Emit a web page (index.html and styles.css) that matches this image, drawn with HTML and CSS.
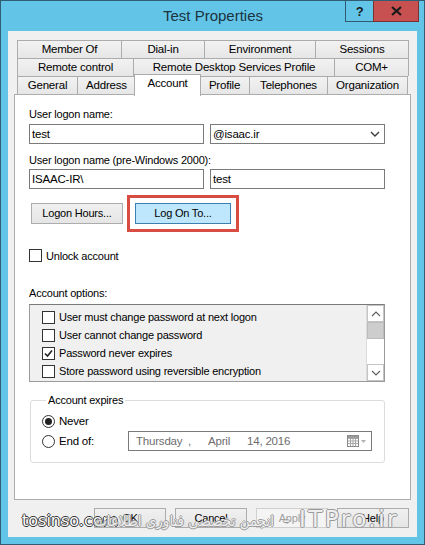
FILE: index.html
```html
<html>
<head>
    <title>Test Properties</title>
    <link rel="stylesheet" href="styles.css">
</head>
<body>

<div class="window">
    <div class="titlebar">
        <div></div>
        <div class="title">Test Properties</div>
        <div class="caption-buttons">
            <div class="cap-btn help">?</div>
            <div class="cap-btn close">
                <svg width="11" height="10" viewBox="0 0 11 10"><path d="M1 1 L10 9 M10 1 L1 9" stroke="#1a1a1a" stroke-width="2.2"/></svg>
            </div>
        </div>
    </div>

    <div class="client">
        <div class="tabs">
            <div class="tab-row">
                <div class="tab" style="width:105px">Member Of</div>
                <div class="tab" style="width:84px">Dial-in</div>
                <div class="tab" style="width:112px">Environment</div>
                <div class="tab" style="width:94px">Sessions</div>
            </div>
            <div class="tab-row">
                <div class="tab" style="width:117px">Remote control</div>
                <div class="tab" style="width:202px">Remote Desktop Services Profile</div>
                <div class="tab" style="width:75px">COM+</div>
            </div>
            <div class="tab-row">
                <div class="tab" style="width:61px">General</div>
                <div class="tab" style="width:59px">Address</div>
                <div class="tab selected" style="width:67px">Account</div>
                <div class="tab" style="width:51px">Profile</div>
                <div class="tab" style="width:79px">Telephones</div>
                <div class="tab" style="width:81px">Organization</div>
            </div>
        </div>

        <div class="panel">
            <div class="label">User logon name:</div>
            <div class="field-row">
                <div class="textbox">test</div>
                <div class="textbox combo">
                    <span>@isaac.ir</span>
                    <svg width="10" height="7" viewBox="0 0 10 7"><path d="M1 1 L5 5 L9 1" fill="none" stroke="#3a3a3a" stroke-width="1.4"/></svg>
                </div>
            </div>

            <div class="label second">User logon name (pre-Windows 2000):</div>
            <div class="field-row">
                <div class="textbox">ISAAC-IR\</div>
                <div class="textbox">test</div>
            </div>

            <div class="button-row">
                <div class="btn">Logon Hours...</div>
                <div class="btn focused">Log On To...</div>
            </div>

            <div class="check unlock">
                <span class="box"></span>
                <span>Unlock account</span>
            </div>

            <div class="label options">Account options:</div>
            <div class="listbox">
                <div class="list-items">
                    <div class="check"><span class="box"></span><span>User must change password at next logon</span></div>
                    <div class="check"><span class="box"></span><span>User cannot change password</span></div>
                    <div class="check"><span class="box checked"><svg width="11" height="11" viewBox="0 0 11 11"><path d="M2 5.5 L4.5 8 L9 2.5" fill="none" stroke="#222" stroke-width="1.6"/></svg></span><span>Password never expires</span></div>
                    <div class="check"><span class="box"></span><span>Store password using reversible encryption</span></div>
                </div>
                <div class="scrollbar">
                    <div class="sb-arrow">
                        <svg width="10" height="6" viewBox="0 0 10 6"><path d="M1 5 L5 1 L9 5" fill="none" stroke="#606060" stroke-width="1.2"/></svg>
                    </div>
                    <div class="sb-thumb"></div>
                    <div class="sb-track"></div>
                    <div class="sb-arrow">
                        <svg width="10" height="6" viewBox="0 0 10 6"><path d="M1 1 L5 5 L9 1" fill="none" stroke="#606060" stroke-width="1.2"/></svg>
                    </div>
                </div>
            </div>

            <fieldset class="group">
                <legend>Account expires</legend>
                <div class="radio-row">
                    <span class="radio on"></span>
                    <span>Never</span>
                </div>
                <div class="radio-row">
                    <span class="radio"></span>
                    <span class="end-of">End of:</span>
                    <div class="datepicker">
                        <span class="dp-day">Thursday</span>
                        <span class="dp-comma">,</span>
                        <span class="dp-month">April</span>
                        <span>14, 2016</span>
                        <span class="dp-icon">
                            <svg width="20" height="12" viewBox="0 0 20 12">
                                <rect x="0.5" y="0.5" width="11" height="11" fill="#fff" stroke="#8a8a8a"/>
                                <path d="M1 3.5 H11 M1 6 H11 M1 8.5 H11 M3.5 3 V11 M6 3 V11 M8.5 3 V11" stroke="#a8a8a8" stroke-width="1"/>
                                <rect x="1" y="1" width="10" height="2" fill="#9a9a9a"/>
                                <path d="M14 5 L19 5 L16.5 8 Z" fill="#b0b0b0"/>
                            </svg>
                        </span>
                    </div>
                </div>
            </fieldset>
        </div>

        <div class="dialog-buttons">
            <div class="btn">OK</div>
            <div class="btn">Cancel</div>
            <div class="btn disabled">Apply</div>
            <div class="btn">Help</div>
        </div>
    </div>
</div>

<div class="watermark">
    <span class="wm-site">tosinso.com</span>
    <span class="wm-forum">انجمن تخصصی فناوری اطلاعات</span>
    <span class="wm-dash">-</span>
    <span class="wm-itpro">ITPro.ir</span>
</div>

</body>
</html>
```

FILE: styles.css
```css
body {
    margin: 0;
    font-family: 'Liberation Sans', Arial, sans-serif;
    font-size: 11px;
    letter-spacing: -0.2px;
    color: #000;
    background-color: #fff;
}

.window {
    position: relative;
    width: 425px;
    height: 545px;
    box-sizing: border-box;
    border: 1px solid #2f5d73;
    background-color: #62c5e8;
}

.titlebar {
    height: 30px;
    display: grid;
    grid-template-columns: 1fr auto 1fr;
}

.title {
    font-size: 15px;
    letter-spacing: 0;
    color: #1c3340;
    line-height: 30px;
    padding-left: 1px;
}

.caption-buttons {
    display: flex;
    justify-content: flex-end;
    align-items: flex-start;
    padding-right: 5px;
}

.cap-btn {
    height: 21px;
    box-sizing: border-box;
    display: flex;
    align-items: center;
    justify-content: center;
    border: 1px solid #2e5b70;
    border-top: none;
}

.help {
    width: 28px;
    font-size: 13px;
    font-weight: bold;
    color: #1a1a1a;
    border-right: none;
}

.close {
    width: 46px;
    background-color: #c75050;
    border-color: #7d3030;
}

.client {
    margin-left: 7px;
    width: 409px;
    height: 506px;
    background-color: #f0f0f0;
    padding-top: 9px;
    box-sizing: border-box;
}

.tabs {
    margin-left: 9px;
    width: 392px;
}

.tab-row {
    display: flex;
    height: 18px;
}

.tab {
    height: 18px;
    box-sizing: border-box;
    border: 1px solid #acacac;
    border-bottom: none;
    margin-right: -1px;
    background: linear-gradient(#f2f2f2, #e6e6e6);
    text-align: center;
    line-height: 17px;
    font-size: 11.5px;
    color: #000;
}

.tab.selected {
    position: relative;
    z-index: 1;
    height: 22px;
    margin-top: -2px;
    margin-left: -1px;
    margin-right: -2px;
    background: #fff;
    line-height: 16px;
}

.panel {
    margin-left: 6px;
    width: 397px;
    height: 406px;
    box-sizing: border-box;
    border: 1px solid #adadad;
    background-color: #fff;
    padding: 12px 0 0 14px;
}

.label {
    line-height: 14px;
    height: 14px;
    margin-bottom: 3px;
}

.label.second {
    margin-top: 9px;
    margin-bottom: 2px;
}

.field-row {
    display: flex;
    gap: 6px;
}

.textbox {
    width: 175px;
    height: 20px;
    box-sizing: border-box;
    border: 1px solid #7a7a7a;
    padding-left: 2px;
    line-height: 18px;
    font-size: 11.5px;
    background-color: #fff;
}

.combo {
    display: flex;
    align-items: center;
    justify-content: space-between;
    padding-right: 4px;
}

.button-row {
    display: flex;
    gap: 10px;
    margin-top: 14px;
    margin-left: 2px;
}

.btn {
    height: 21px;
    box-sizing: border-box;
    border: 1px solid #acacac;
    background: linear-gradient(#f0f0f0, #e5e5e5);
    text-align: center;
    line-height: 19px;
}

.button-row .btn {
    width: 92px;
}

.button-row .btn.focused {
    width: 96px;
    margin-left: 2px;
    background: #bee6fd;
    border-color: #3c7fb1;
    outline: 3px solid #d84c43;
    outline-offset: 5px;
}

.check {
    display: flex;
    align-items: center;
    gap: 4px;
    height: 18px;
}

.box {
    width: 13px;
    height: 13px;
    box-sizing: border-box;
    border: 1px solid #333;
    background-color: #fff;
    display: flex;
    align-items: center;
    justify-content: center;
}

.check.unlock {
    margin-top: 22px;
    height: 19px;
}

.label.options {
    margin-top: 21px;
    margin-bottom: 4px;
}

.listbox {
    width: 356px;
    height: 78px;
    box-sizing: border-box;
    border: 1px solid #9a9a9a;
    border-top-color: #7a7a7a;
    background-color: #f0f0f0;
    display: flex;
}

.list-items {
    flex: 1;
    padding: 3px 0 0 12px;
}

.scrollbar {
    width: 17px;
    display: flex;
    flex-direction: column;
    background-color: #fff;
    border-left: 1px solid #dcdcdc;
}

.sb-arrow {
    height: 17px;
    box-sizing: border-box;
    border: 1px solid #c4c4c4;
    display: flex;
    align-items: center;
    justify-content: center;
    background-color: #fff;
}

.sb-thumb {
    height: 17px;
    box-sizing: border-box;
    background-color: #cdcdcd;
    border: 1px solid #bcbcbc;
}

.sb-track {
    flex: 1;
}

.group {
    margin: 11px 0 0 1px;
    width: 355px;
    height: 70px;
    box-sizing: border-box;
    border: 1px solid #dcdcdc;
    border-radius: 3px;
    padding: 4px 0 0 11px;
}

.group legend {
    padding: 0 2px;
    margin-left: 4px;
    line-height: 14px;
}

.radio-row {
    display: flex;
    align-items: center;
    gap: 4px;
    height: 20px;
}

.radio {
    width: 13px;
    height: 13px;
    box-sizing: border-box;
    border: 1px solid #333;
    border-radius: 50%;
    background-color: #fff;
    display: flex;
    align-items: center;
    justify-content: center;
}

.radio.on::after {
    content: "";
    width: 7px;
    height: 7px;
    border-radius: 50%;
    background-color: #222;
}

.radio-row .end-of {
    width: 65px;
    font-size: 11.5px;
}

.radio-row span {
    font-size: 11.5px;
}

.datepicker {
    width: 244px;
    height: 20px;
    box-sizing: border-box;
    border: 1px solid #7a7a7a;
    display: flex;
    align-items: center;
    padding-left: 7px;
    color: #6d6d6d;
}

.datepicker span {
    font-size: 11.5px;
}

.dp-day {
    width: 52px;
}

.dp-comma {
    width: 20px;
}

.dp-month {
    width: 39px;
}

.datepicker .dp-icon {
    margin-left: auto;
    margin-right: 4px;
    display: flex;
}

.dialog-buttons {
    display: flex;
    justify-content: flex-end;
    gap: 9px;
    margin-top: 8px;
    padding-right: 8px;
}

.dialog-buttons .btn {
    width: 72px;
    height: 20px;
    line-height: 18px;
}

.dialog-buttons .btn.disabled {
    color: #a0a0a0;
    border-color: #cfcfcf;
    background: #f4f4f4;
}

.watermark {
    position: absolute;
    left: 22px;
    top: 506px;
    width: 377px;
    display: flex;
    align-items: flex-end;
    white-space: nowrap;
    letter-spacing: 0;
    font-family: 'DejaVu Sans', sans-serif;
    pointer-events: none;
}

.wm-site {
    font-size: 16px;
    color: #fff;
    margin-bottom: 2px;
    text-shadow: -1px 0 #333, 1px 0 #333, 0 -1px #333, 0 1px #333;
}

.wm-forum,
.wm-dash,
.wm-itpro {
    color: rgba(255, 255, 255, 0.85);
    text-shadow: -1px 0 #9a9a9a, 1px 0 #9a9a9a, 0 -1px #9a9a9a, 0 1px #9a9a9a;
}

.wm-forum {
    font-family: 'DejaVu Sans Condensed', 'DejaVu Sans', sans-serif;
    font-size: 15px;
    margin-left: -24px;
    margin-bottom: 2px;
}

.wm-dash {
    font-size: 20px;
    margin-left: auto;
}

.wm-itpro {
    font-size: 23px;
    letter-spacing: 2.5px;
    margin-left: 9px;
}
```
